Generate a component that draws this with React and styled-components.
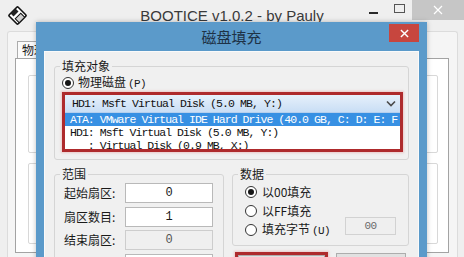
import React from "react";
import styled, { createGlobalStyle } from "styled-components";

const CJK = `"Noto Sans CJK SC", "Noto Sans", sans-serif`;
const MONO = `"Liberation Mono", "Noto Sans CJK SC", monospace`;

const GlobalStyle = createGlobalStyle`
  *, *::before, *::after { box-sizing: border-box; }
  html, body { margin: 0; padding: 0; width: 464px; height: 257px; overflow: hidden; background: #efefef; }
  #root { width: 464px; height: 257px; }
`;

const Desktop = styled.div`
  position: relative;
  width: 464px;
  height: 257px;
  overflow: hidden;
  background: #efefef;
  font-family: ${CJK};
  color: #1a1a1a;
`;

/* ---------- background window ---------- */
const MainWindow = styled.div`
  display: flex;
  flex-direction: column;
  height: 100%;
`;

const MainTitleBar = styled.div`
  height: 31px;
  flex-shrink: 0;
  display: grid;
  grid-template-columns: 1fr auto 1fr;
  align-items: start;
`;

const AppIcon = styled.svg`
  display: block;
  margin: 6px 0 0 8px;
`;

const MainTitle = styled.div`
  font-family: "Liberation Sans", Arial, sans-serif;
  font-size: 15px;
  line-height: 31px;
  color: #3a3a3a;
  white-space: nowrap;
`;

const Controls = styled.div`
  justify-self: end;
  display: flex;
  align-items: flex-start;
`;

const CtrlButton = styled.div`
  width: ${(p) => p.$w}px;
  height: 20px;
  display: flex;
  align-items: center;
  justify-content: center;
  background: ${(p) => p.$bg || "transparent"};
`;

const MinGlyph = styled.span`
  width: 9px;
  height: 2px;
  margin-top: 6px;
  background: #2a2a2a;
`;

const MaxGlyph = styled.span`
  width: 11px;
  height: 9px;
  margin-top: -3px;
  border: 1px solid #555;
`;

const MainFrame = styled.div`
  flex: 1;
  margin: 0 6px 0 7px;
  border: 1px solid #dcdcdc;
  border-bottom: none;
  border-radius: 3px 3px 0 0;
  background: #f5f5f5;
  padding: 9px 8px 0 7px;
  display: flex;
  flex-direction: column;
`;

const TabStrip = styled.div`
  display: flex;
  padding-left: 2px;
  height: 17px;
`;

const Tab = styled.div`
  border: 1px solid #acacac;
  border-bottom: none;
  background: #fbfbfb;
  font-size: 12px;
  line-height: 16px;
  padding: 0 5px 0 4px;
  white-space: nowrap;
`;

const TabPanel = styled.div`
  height: 195px;
  border: 1px solid #a3a3a3;
  background: #fff;
  padding: 16px 10px 0 12px;
  display: flex;
  flex-direction: column;
  gap: 10px;
`;

const PanelGroup = styled.div`
  height: ${(p) => p.$h}px;
  border: 1px solid #d8d8d8;
  border-radius: 2px;
`;

/* ---------- dialog ---------- */
const Dialog = styled.div`
  position: absolute;
  left: 36px;
  top: 22px;
  width: 391px;
  height: 245px;
  background: #5b9aca;
  padding: 0 8px;
  display: flex;
  flex-direction: column;
  box-shadow: 0 0 5px rgba(0, 0, 0, 0.25);
`;

const DialogTitleBar = styled.div`
  height: 29px;
  flex-shrink: 0;
  display: grid;
  grid-template-columns: 1fr auto 1fr;
  align-items: start;
`;

const DialogTitle = styled.div`
  grid-column: 2;
  font-size: 15px;
  line-height: 29px;
  color: #1e3246;
  white-space: nowrap;
`;

const CloseButton = styled.div`
  grid-column: 3;
  justify-self: end;
  margin-top: 2px;
  width: 30px;
  height: 18px;
  background: #c7463e;
  display: flex;
  align-items: center;
  justify-content: center;
`;

const DialogBody = styled.div`
  flex: 1;
  background: #f0f0f0;
  border: 1px solid #fafafa;
  border-bottom: none;
  padding: 7px 9px 0 9px;
`;

const GroupBox = styled.fieldset`
  margin: 0;
  min-width: 0;
  border: 1px solid #d5d5d5;
  border-radius: 3px;
  padding: 0 ${(p) => p.$pr || 5}px ${(p) => p.$pb || 0}px 7px;
`;

const Legend = styled.legend`
  padding: 0 2px;
  margin-left: -2px;
  font-size: 12px;
  line-height: 14px;
  color: #1a1a1a;
`;

const RadioRow = styled.label`
  display: flex;
  align-items: center;
  gap: ${(p) => p.$gap || 4}px;
  height: ${(p) => p.$h || 14}px;
  margin-top: ${(p) => p.$mt || 0}px;
  font-size: 12px;
  line-height: 14px;
  white-space: nowrap;
`;

const RadioCircle = styled.span`
  width: 12px;
  height: 12px;
  border-radius: 50%;
  border: 1px solid #333;
  background: #fff;
  flex-shrink: 0;
  display: flex;
  align-items: center;
  justify-content: center;
  &::after {
    content: "";
    width: 6px;
    height: 6px;
    border-radius: 50%;
    background: ${(p) => (p.$checked ? "#151515" : "transparent")};
  }
`;

const Accel = styled.span`
  font-family: ${MONO};
  font-size: 11px;
  letter-spacing: -0.6px;
  margin-left: 2px;
`;

const Marked = styled.div`
  margin-top: 2px;
  height: 60px;
  border: 3px solid #ae2a2c;
  box-shadow: 0 0 2px 1px rgba(230, 160, 160, 0.5);
  background: #fff;
  overflow: hidden;
`;

const ComboHead = styled.div`
  height: 18px;
  display: flex;
  align-items: center;
  justify-content: space-between;
  padding: 0 4px 0 7px;
  background: linear-gradient(#e6f0fb, #c9def5);
  border-bottom: 1px solid #b5cfed;
`;

const MonoText = styled.span`
  font-family: ${MONO};
  font-size: 11.5px;
  letter-spacing: -0.9px;
  white-space: pre;
  color: #111;
`;

const ListRow = styled.div`
  height: 13px;
  line-height: 13px;
  padding-left: 5px;
  white-space: pre;
  overflow: hidden;
  font-family: ${MONO};
  font-size: 11.5px;
  letter-spacing: -0.95px;
  background: ${(p) => (p.$selected ? "#3790e3" : "transparent")};
  color: ${(p) => (p.$selected ? "#fff" : "#111")};
`;

const LowerGrid = styled.div`
  margin-top: 7px;
  display: grid;
  grid-template-columns: 170px 177px;
  column-gap: 8px;
  align-items: start;
`;

const RangeRows = styled.div`
  margin: 2px 0 0 2px;
  display: grid;
  grid-template-columns: 61px 88px;
  grid-auto-rows: 20px;
  row-gap: 3.5px;
  padding-bottom: 20px;
`;

const FieldLabel = styled.span`
  font-size: 12px;
  line-height: 20px;
  white-space: nowrap;
`;

const Field = styled.div`
  height: 20px;
  border: 1px solid ${(p) => (p.$disabled ? "#cdcdcd" : "#b9b9b9")};
  background: ${(p) => (p.$disabled ? "#efefef" : "#fff")};
  font-family: ${MONO};
  font-size: 12px;
  line-height: 18px;
  text-align: center;
  color: ${(p) => (p.$disabled ? "#555" : "#1a1a1a")};
`;

const RightColumn = styled.div`
  display: flex;
  flex-direction: column;
`;

const DataGrid = styled.div`
  margin: 2px 0 0 5px;
  display: grid;
  grid-template-columns: auto 1fr;
  grid-template-rows: 18px 19px 20px;
`;

const ByteField = styled.div`
  grid-column: 2;
  grid-row: 2 / span 2;
  align-self: end;
  justify-self: end;
  margin-bottom: 5px;
  width: 51px;
  height: 18px;
  border: 1px solid #d2d2d2;
  background: #efefef;
  font-family: ${MONO};
  font-size: 11px;
  letter-spacing: -0.6px;
  line-height: 16px;
  text-align: center;
  color: #6a6a6a;
`;

const ButtonRow = styled.div`
  display: flex;
  align-items: flex-start;
  gap: 8px;
  margin: 6px 0 0 3px;
`;

const MarkedButton = styled.div`
  width: 93px;
  border: 3px solid #ae2a2c;
  box-shadow: 0 0 2px 1px rgba(230, 160, 160, 0.5);
`;

const Button = styled.div`
  width: ${(p) => (p.$w ? `${p.$w}px` : "auto")};
  margin-top: ${(p) => p.$mt || 0}px;
  height: 24px;
  border: 1px solid #adadad;
  background: #e1e1e1;
  font-size: 12px;
  line-height: 22px;
  text-align: center;
`;

const Cross = ({ size = 9, color = "#fff", w = 1.3 }) => (
  <svg width={size} height={size} viewBox="0 0 10 10">
    <path d="M1 1 L9 9 M9 1 L1 9" stroke={color} strokeWidth={w} fill="none" />
  </svg>
);

const Radio = ({ checked, children, ...rest }) => (
  <RadioRow {...rest}>
    <RadioCircle $checked={checked} />
    <span>{children}</span>
  </RadioRow>
);

export default function App() {
  return (
    <Desktop>
      <GlobalStyle />
      <MainWindow>
        <MainTitleBar>
          <AppIcon width="19" height="19" viewBox="0 0 19 19">
            <g transform="rotate(-45 9.5 9.5)">
              <rect x="3.2" y="3.2" width="12.6" height="12.6" rx="1" fill="#fff" stroke="#111" strokeWidth="1.6" />
              <rect x="6" y="3.2" width="7" height="4.2" fill="#222" />
              <rect x="5.6" y="10.2" width="7.8" height="5.6" fill="#cfcfcf" stroke="#111" strokeWidth="1" />
            </g>
          </AppIcon>
          <MainTitle>BOOTICE v1.0.2 - by Pauly</MainTitle>
          <Controls>
            <CtrlButton $w={26}>
              <MinGlyph />
            </CtrlButton>
            <CtrlButton $w={26}>
              <MaxGlyph />
            </CtrlButton>
            <CtrlButton $w={52} $bg="#c6c6c6">
              <Cross size={10} w={1.2} />
            </CtrlButton>
          </Controls>
        </MainTitleBar>
        <MainFrame>
          <TabStrip>
            <Tab>物理磁盘</Tab>
          </TabStrip>
          <TabPanel>
            <PanelGroup $h={78} />
            <PanelGroup $h={81} />
          </TabPanel>
        </MainFrame>
      </MainWindow>

      <Dialog>
        <DialogTitleBar>
          <DialogTitle>磁盘填充</DialogTitle>
          <CloseButton>
            <Cross size={9} w={1.6} />
          </CloseButton>
        </DialogTitleBar>
        <DialogBody>
          <GroupBox $pb={7}>
            <Legend>填充对象</Legend>
            <Radio checked $mt={3}>
              物理磁盘<Accel>(P)</Accel>
            </Radio>
            <Marked>
              <ComboHead>
                <MonoText>HD1: Msft Virtual Disk (5.0 MB, Y:)</MonoText>
                <svg width="10" height="7" viewBox="0 0 10 7">
                  <path d="M1 1.5 L5 5.5 L9 1.5" stroke="#4a4a4a" strokeWidth="1.6" fill="none" />
                </svg>
              </ComboHead>
              <ListRow $selected>ATA: VMware Virtual IDE Hard Drive (40.0 GB, C: D: E: F</ListRow>
              <ListRow>HD1: Msft Virtual Disk (5.0 MB, Y:)</ListRow>
              <ListRow>{"   : Virtual Disk (0.9 MB, X:)"}</ListRow>
            </Marked>
          </GroupBox>

          <LowerGrid>
            <GroupBox $pr={9}>
              <Legend>范围</Legend>
              <RangeRows>
                <FieldLabel>起始扇区:</FieldLabel>
                <Field>0</Field>
                <FieldLabel>扇区数目:</FieldLabel>
                <Field>1</Field>
                <FieldLabel>结束扇区:</FieldLabel>
                <Field $disabled>0</Field>
                <FieldLabel>每次写入:</FieldLabel>
                <Field>64</Field>
              </RangeRows>
            </GroupBox>
            <RightColumn>
              <GroupBox $pr={12} $pb={5}>
                <Legend>数据</Legend>
                <DataGrid>
                  <Radio checked $h={18} $gap={5}>
                    以00填充
                  </Radio>
                  <Radio $h={19} $gap={5} style={{ gridRow: 2 }}>
                    以FF填充
                  </Radio>
                  <Radio $h={20} $gap={5} style={{ gridRow: 3 }}>
                    填充字节<Accel>(U)</Accel>
                  </Radio>
                  <ByteField>00</ByteField>
                </DataGrid>
              </GroupBox>
              <ButtonRow>
                <MarkedButton>
                  <Button>开始填充</Button>
                </MarkedButton>
                <Button $w={70} $mt={1}>
                  关闭
                </Button>
              </ButtonRow>
            </RightColumn>
          </LowerGrid>
        </DialogBody>
      </Dialog>
    </Desktop>
  );
}
